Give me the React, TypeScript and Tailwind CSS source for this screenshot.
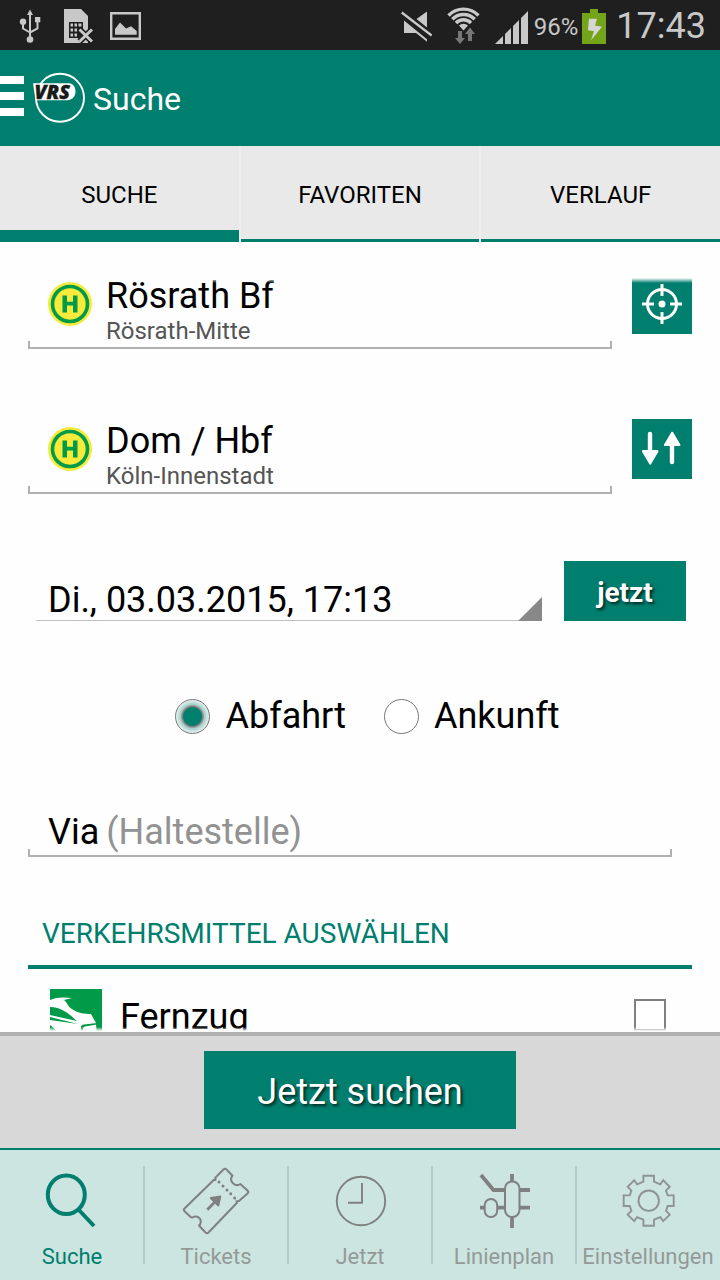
import { useState, type ReactNode } from 'react'

const tabs = ['SUCHE', 'FAVORITEN', 'VERLAUF']

function StatusBar() {
  return (
    <div className="flex h-[50px] shrink-0 items-center bg-[#1f1f1f] pl-[19px] pr-[14px] text-[#c8c8c8]">
      {/* USB */}
      <svg className="h-[50px] w-[22px]" viewBox="19 0 22 50" fill="none" stroke="currentColor" strokeWidth={2}>
        <path d="M30 13V39M23 23v5.500l7 4M37.500 21v7.500l-7.500 4" />
        <path d="M30 9.500l3 5.500h-6z" fill="currentColor" stroke="none" />
        <circle cx="30" cy="39.500" r="3.300" fill="currentColor" stroke="none" />
        <circle cx="23" cy="21.700" r="3.200" fill="currentColor" stroke="none" />
        <path d="M35 17h5.300v5.300H35z" fill="currentColor" stroke="none" />
      </svg>
      {/* SIM missing */}
      <svg className="ml-[23px] h-[50px] w-[30px]" viewBox="64 0 30 50" fill="none">
        <path d="M64 9h17l7 7v27H64z" fill="currentColor" />
        <path d="M69 22h14v16H69z" fill="#1f1f1f" />
        <path d="M70.500 23.500h2.500v3h-2.500zM74.500 23.500h2.500v3h-2.500zM78.500 23.500h3v3h-3zM70.500 28.500h2.500v3h-2.500zM74.500 28.500h2.500v3h-2.500zM70.500 33.500h2.500v3h-2.500zM74.500 33.500h2.500v3h-2.500z" fill="currentColor" />
        <path d="M79.500 29.500l12.500 12M92 29.500l-12.500 12" stroke="#1f1f1f" strokeWidth={6} />
        <path d="M79.500 29.500l12.500 12M92 29.500l-12.500 12" stroke="currentColor" strokeWidth={3} />
      </svg>
      {/* Picture */}
      <svg className="ml-4 h-[50px] w-8" viewBox="110 0 32 50" fill="none">
        <path d="M111.200 13.200h28.600v25.600h-28.600z" stroke="currentColor" strokeWidth={2.400} />
        <path d="M115 34.700V29l5-6.500 6 6 5-2.200 5.700 4.700v3.700z" fill="currentColor" />
      </svg>
      <div className="ml-auto flex items-center">
        {/* Muted speaker */}
        <svg className="h-[50px] w-[31px]" viewBox="401 0 31 50" fill="currentColor">
          <path d="M404 20.500l23 18.800v2.400L416 33h-12zM427 11.500v16L416.500 19z" />
          <path d="M401.700 12.500l30 23" stroke="currentColor" strokeWidth={2.400} />
        </svg>
        {/* Wifi */}
        <svg className="ml-[14px] h-[50px] w-9" viewBox="446 0 36 50" fill="none" stroke="currentColor" strokeWidth={3.400}>
          <path d="M448.500 15.500a20.800 20.800 0 0 1 30 0M452.300 19.300a15.500 15.500 0 0 1 22.400 0M456 23a10.300 10.300 0 0 1 15 0" />
          <path d="M463.500 30.500l-4.500-5a6.500 6.500 0 0 1 9 0z" fill="currentColor" stroke="none" />
          <path d="M458 31h4v7h3l-5 6-5-6h3zM468 41v-7h-3l5-6.500 5 6.500h-3v7z" fill="#777" stroke="none" />
        </svg>
        {/* Signal */}
        <svg className="ml-[13px] h-[50px] w-[33px]" viewBox="495 0 33 50" fill="currentColor">
          <path d="M495 44l8-8v8zM505 34l6-6v16h-6zM513 26l6-6v24h-6zM521 18l7-7v33h-7z" />
        </svg>
        <span className="ml-1.5 pt-1 text-2xl">96%</span>
        <svg className="ml-1 h-[50px] w-6" viewBox="582 0 24 50">
          <path d="M590 9h8v4h8v31h-24V13h8z" fill="#74a41a" />
          <path d="M589 18.700h8L595 25.500l7 1.200-11 13.600 3-9-6-1z" fill="#d6d6d6" />
        </svg>
        <span className="ml-2.5 pt-px text-4xl">17:43</span>
      </div>
    </div>
  )
}

function AppBar() {
  return (
    <header className="flex h-24 shrink-0 items-center bg-[#007e6e] text-white">
      <button type="button" aria-label="Menü" className="flex w-6 flex-col gap-2 pb-1">
        <span className="h-2 bg-white" />
        <span className="h-2 bg-white" />
        <span className="h-2 bg-white" />
      </button>
      <svg className="ml-[9px] h-[52px] w-[52px]" viewBox="33 72 52 52">
        <circle cx="60" cy="97.800" r="24" fill="none" stroke="#fff" strokeWidth={1.900} />
        <path d="M33 83.300h36c4 0 6.500 4 6.500 8.500s-3.500 8.500-8.500 8.500H35.500z" fill="#fff" />
        <text x="34.500" y="98.800" fill="#1a1a1a" stroke="#1a1a1a" strokeWidth={0.400} fontFamily="Noto Sans, sans-serif" fontSize="19.500" fontWeight="900" fontStyle="italic">VRS</text>
      </svg>
      <h1 className="ml-2 pt-px text-[32px]">Suche</h1>
    </header>
  )
}

// Android style text field frame: bottom line with short upright ends
function Field({ className, children }: { className: string; children: ReactNode }) {
  return (
    <div className={`relative min-w-0 flex-1 ${className}`}>
      {children}
      <span className="pointer-events-none absolute inset-x-0 bottom-0 h-2 border-x-2 border-b-2 border-[#b0b0b0]" />
    </div>
  )
}

function StopIcon() {
  return (
    <svg className="h-11 w-11 shrink-0" viewBox="0 0 44 44">
      <circle cx="22" cy="22" r="22" fill="#f6ea3a" />
      <circle cx="22" cy="22" r="17.500" fill="none" stroke="#009a48" strokeWidth={3.600} />
      <path d="M14.500 13.500h4.500v6.300h6v-6.300h4.500v17h-4.500v-6.900h-6v6.900h-4.500z" fill="#009a48" />
    </svg>
  )
}

function StopRow({ label, name, place, action, icon }: { label: string; name: string; place: string; action: string; icon: ReactNode }) {
  return (
    <div className="flex items-start gap-5 px-7">
      <Field className="flex gap-[14px] pb-[5px] pl-5">
        <div className="flex h-[60px] items-center">
          <StopIcon />
        </div>
        <div className="min-w-0 flex-1">
          <input aria-label={label} defaultValue={name} className="block h-11 w-full bg-transparent text-4xl outline-none" />
          <p className="text-2xl leading-[26px] text-[#555]">{place}</p>
        </div>
      </Field>
      <button type="button" aria-label={action} className="h-[60px] w-[60px] shrink-0 bg-[#007e6e] text-white">
        {icon}
      </button>
    </div>
  )
}

function Radio({ label, checked }: { label: string; checked?: boolean }) {
  return (
    <label className="flex items-center gap-[15px] text-4xl leading-11">
      <input
        type="radio"
        name="zeit"
        defaultChecked={checked}
        className="h-[35px] w-[35px] appearance-none rounded-full border border-[#777] bg-white checked:bg-[radial-gradient(circle,#007e6e_9px,#808080_10px,#9a9a9a_11px,#a4cfc9_12px,#ffffff_18px)]"
      />
      {label}
    </label>
  )
}

const navItems = [
  {
    label: 'Suche',
    icon: (
      <g strokeWidth={4}>
        <ellipse cx="34.300" cy="28.700" rx="18.500" ry="19.300" />
        <path d="M46 43l16 17" />
      </g>
    ),
  },
  {
    label: 'Tickets',
    icon: (
      <g strokeWidth={2} strokeLinejoin="round">
        <path d="M8.500 42.500L38 13.700l1.500.300v-2.500l8-8q1.500-1.500 3 0l6 6.200-1 1.500c-2 5 4.500 10 8.800 6.800l7.200 6.500q1.500 1.500 0 3L63 35l-2.500.300.500 1.500-28.500 29.700q-1.500 1.500-3 0L23 59.500l1.300-1.500c2-6-3.500-9-7.800-6.500l-1.500-.200-6.500-6q-1.300-1.500 0-2.800z" />
        <path d="M31.300 43.700l7-7.200" strokeWidth={2.800} />
        <path d="M44.300 30.500l-2 9-7.500-7.500z" fill="currentColor" />
        <path d="M43 16h.01M47 20h.01M51 24h.01M54.700 27.700h.01M58.700 32h.01" strokeWidth={3} strokeLinecap="round" />
      </g>
    ),
  },
  {
    label: 'Jetzt',
    icon: (
      <g strokeWidth={1.900}>
        <circle cx="41" cy="35" r="24.200" />
        <path d="M42 17v19.700H28" />
      </g>
    ),
  },
  {
    label: 'Linienplan',
    icon: (
      <g strokeWidth={3.800}>
        <path d="M17 9l12.500 15H41M48 8v7M48 51v11M56 24h10M56 41.700h10M16 41.700h4M33 41.700h7" />
        <rect x="41" y="15.500" width="14.500" height="35.500" rx="7" strokeWidth={2} />
        <rect x="20.700" y="33" width="12.500" height="18" rx="6.200" strokeWidth={2} />
      </g>
    ),
  },
  {
    label: 'Einstellungen',
    icon: (
      <g strokeWidth={1.900} transform="translate(40.700 34.700)" opacity={0.8}>
        <circle r="10.200" />
        <path d="M-5.300-25H5.300V-19L11.600-16.400 14.500-20.400 21-14 17.300-10 19-5.300H25V5.300H19L17.300 10 21 14 14.500 20.400 11.600 16.400 5.300 19V25H-5.300V19L-11.600 16.400-14.500 20.400-21 14-17.300 10-19 5.300H-25V-5.300H-19L-17.300-10-21-14-14.500-20.400-11.600-16.400-5.300-19z" />
      </g>
    ),
  },
]

function BottomNav() {
  return (
    <nav className="shrink-0 border-t-2 border-[#007e6e] bg-[#cce5e1] pb-3 pt-4">
      <ul className="grid grid-cols-5">
        {navItems.map((item, i) => (
          <li
            key={item.label}
            className="relative after:absolute after:-right-px after:top-0 after:h-[98px] after:w-0.5 after:bg-[#b4cbc7] last:after:hidden"
          >
            <a href="#" className={`flex flex-col items-center ${i === 0 ? 'text-[#007e6e]' : 'text-[#808080]'}`}>
              <svg className="h-20 w-20" viewBox="0 0 80 80" fill="none" stroke="currentColor">
                {item.icon}
              </svg>
              <span className={`text-[22px] leading-[22px] ${i === 0 ? '' : 'text-[#949a98]'}`}>{item.label}</span>
            </a>
          </li>
        ))}
      </ul>
    </nav>
  )
}

export default function App() {
  const [tab, setTab] = useState('SUCHE')

  return (
    <div className="flex h-screen flex-col overflow-hidden bg-[#fefefe] font-[Roboto,sans-serif] text-black">
      <StatusBar />
      <AppBar />

      <div role="tablist" className="grid h-24 shrink-0 grid-cols-3 gap-0.5 bg-[#eeeeee]">
        {tabs.map((name) => (
          <button
            key={name}
            type="button"
            role="tab"
            aria-selected={tab === name}
            onClick={() => setTab(name)}
            className={`relative bg-[#e9e9e9] pt-0.5 text-2xl after:absolute after:inset-x-0 after:bottom-0 after:bg-[#007e6e] ${tab === name ? 'after:h-3' : 'after:h-[3px]'}`}
          >
            {name}
          </button>
        ))}
      </div>

      <main className="relative min-h-0 flex-1">
        <form className="h-full overflow-y-auto pt-8 [scrollbar-width:none]">
          <div className="flex flex-col gap-[70px]">
            <StopRow
              label="Start"
              name="Rösrath Bf"
              place="Rösrath-Mitte"
              action="Standort bestimmen"
              icon={
                <svg viewBox="0 0 60 60" fill="none" stroke="currentColor" strokeWidth={3}>
                  <circle cx="30" cy="30" r="14.500" />
                  <path d="M30 10v12M30 38v12M10 30h12M38 30h12" />
                  <circle cx="30" cy="30" r="3.500" fill="currentColor" stroke="none" />
                </svg>
              }
            />
            <StopRow
              label="Ziel"
              name="Dom / Hbf"
              place="Köln-Innenstadt"
              action="Start und Ziel tauschen"
              icon={
                <svg viewBox="0 0 60 60" fill="currentColor" stroke="currentColor" strokeLinejoin="round" strokeLinecap="round">
                  <path d="M18 15v18M40 27v16" strokeWidth={4.400} />
                  <path d="M11 32.200h14.400L18.200 44.500zM33 26h14.400L40.200 13.800z" strokeWidth={2.200} />
                </svg>
              }
            />
          </div>

          <div className="mt-[67px] flex gap-[22px] pl-9 pr-[34px]">
            <div className="relative min-w-0 flex-1">
              <select
                aria-label="Datum und Uhrzeit"
                className="h-[60px] w-full appearance-none border-b border-[#c0c0c0] bg-transparent pl-3 pt-[18px] text-4xl outline-none"
              >
                <option>Di., 03.03.2015, 17:13</option>
              </select>
              <svg className="pointer-events-none absolute bottom-0 right-0 h-6 w-6" viewBox="0 0 24 24">
                <path d="M24 0v24H0z" fill="#888" />
              </svg>
            </div>
            <button type="button" className="h-[60px] w-[122px] bg-[#007e6e] pt-1 text-[28px] font-bold text-white [text-shadow:2px_2px_3px_#000000b0]">
              jetzt
            </button>
          </div>

          <div className="mt-[73px] flex justify-center gap-[38px] pl-[15px]">
            <Radio label="Abfahrt" checked />
            <Radio label="Ankunft" />
          </div>

          <div className="mt-[72px] flex pl-7 pr-12">
            <Field className="flex gap-[7px] pb-[3px] pl-5 text-4xl">
              <label htmlFor="via" className="leading-11">Via</label>
              <input id="via" placeholder="(Haltestelle)" className="h-11 min-w-0 flex-1 bg-transparent outline-none placeholder:text-[#929292]" />
            </Field>
          </div>

          <section className="mx-7 mt-14">
            <h2 className="border-b-4 border-[#007e6e] pb-[11px] pl-[14px] text-[28px] leading-[41px] text-[#007e6e]">VERKEHRSMITTEL AUSWÄHLEN</h2>
            <label className="mt-5 flex items-center gap-[18px] pl-[22px] pr-[26px] text-4xl">
              <svg className="h-[52px] w-[52px]" viewBox="0 0 52 52">
                <path d="M0 0h52v52H0z" fill="#009a48" />
                <path d="M0 11C6 8 14 8 22 9l-8 2c4 3 3 6 8 9 5 4 12 5 19 5l5 9 1 18H0v-8l12 2L0 36v-5l28 4L0 28v-2l27 6c-6-5-14-14-27-14z" fill="#fff" />
                <path d="M31 42v-4q0-2 3-2.500l13-1.500v1.500l-12 2q-2 .500-2 2V42z" fill="#009a48" />
              </svg>
              <span className="pt-1">Fernzug</span>
              <input type="checkbox" className="ml-auto h-8 w-8 appearance-none border-2 border-[#808080] bg-white checked:bg-[#007e6e]" />
            </label>
          </section>
        </form>
        <div className="pointer-events-none absolute inset-x-0 top-0 h-11 bg-[linear-gradient(#fefefe_36px,transparent_41px)]" />
        <div className="pointer-events-none absolute inset-x-0 bottom-0 h-2 bg-[linear-gradient(transparent_3px,#fefefe_7px)]" />
      </main>

      <div className="flex shrink-0 justify-center border-t-4 border-[#b0b0b0] bg-[#d8d8d8] pb-[19px] pt-[15px]">
        <button type="button" className="h-[78px] w-[312px] bg-[#007e6e] pt-1 text-4xl text-white [text-shadow:2px_2px_3px_#000000b0]">
          Jetzt suchen
        </button>
      </div>

      <BottomNav />
    </div>
  )
}
